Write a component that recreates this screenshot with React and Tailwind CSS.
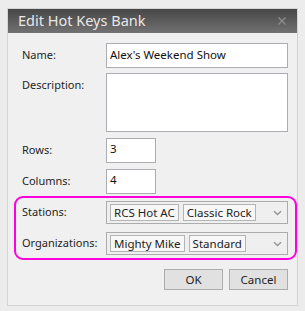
import React from "react";

const font = { fontFamily: '"Segoe UI", "Noto Sans", sans-serif' };

function Chevron() {
  return (
    <svg width="9" height="6" viewBox="0 0 9 6" className="shrink-0">
      <path d="M1 1.2 L4.5 4.5 L8 1.2" fill="none" stroke="#969696" strokeWidth="1.5" />
    </svg>
  );
}

function Tag({ children }) {
  return (
    <span className="h-[17px] px-[3px] flex items-center border border-[#b4b4b4] bg-[#f7f7f7] text-[11.5px] leading-none text-[#222]">
      {children}
    </span>
  );
}

function Field({ label, h = "h-[25px]", w = "w-[182px]", children, top }) {
  return (
    <div className="flex items-start">
      <div className="w-[84px] h-[25px] flex items-center text-[11px] text-[#1e1e1e]">{label}</div>
      <div className={`${w} ${h} border border-[#abadb3] bg-white px-[3px] ${top ? "pt-[2px]" : "pt-[3px]"} text-[11.5px] leading-[16px] text-[#111]`}>
        {children}
      </div>
    </div>
  );
}

function Combo({ label, tags }) {
  return (
    <div className="flex items-center">
      <div className="w-[84px] text-[11px] text-[#1e1e1e]">{label}</div>
      <div className="w-[182px] h-[23px] border border-[#acacac] bg-[#efefef] flex items-center pl-[3px] pr-[5px] gap-[4px]">
        {tags.map((t) => (
          <Tag key={t}>{t}</Tag>
        ))}
        <div className="flex-1" />
        <Chevron />
      </div>
    </div>
  );
}

export default function App() {
  return (
    <div style={font} className="w-[305px] h-[311px] bg-[#ececec] pl-[7px] pt-[8px] overflow-hidden">
      <div className="w-[291px] h-[298px] border border-[#d4d4d4] bg-[#f0f0f0] flex flex-col">
        <div className="h-[24px] bg-gradient-to-b from-[#474747] to-[#727272] flex items-center justify-between pl-[10px] pr-[11px]">
          <span className="text-[14.5px] leading-none text-[#e8e8e8] pb-[1px]">Edit Hot Keys Bank</span>
          <svg width="8" height="8" viewBox="0 0 8 8">
            <path d="M0.5 0.5 L7.5 7.5 M7.5 0.5 L0.5 7.5" stroke="#8c8c8c" strokeWidth="1.4" />
          </svg>
        </div>
        <div className="flex flex-col pl-[14px] pt-[10px]">
          <Field label="Name:">Alex's Weekend Show</Field>
          <div className="h-[5px]" />
          <Field label="Description:" h="h-[59px]" />
          <div className="h-[6px]" />
          <Field label="Rows:" w="w-[50px]" top>3</Field>
          <div className="h-[6px]" />
          <Field label="Columns:" w="w-[50px]" top>4</Field>
          <div className="ml-[-8px] mt-[2px] w-[283px] h-[64px] border-2 border-[#ff00dc] rounded-[9px] pl-[6px] pt-[3px] flex flex-col gap-[8px]">
            <Combo label="Stations:" tags={["RCS Hot AC", "Classic Rock"]} />
            <Combo label="Organizations:" tags={["Mighty Mike", "Standard"]} />
          </div>
          <div className="flex justify-end gap-[6px] mt-[9px] pr-[9px]">
            <button className="w-[59px] h-[21px] border border-[#adadad] bg-[#e1e1e1] text-[11.5px] text-[#1e1e1e] leading-none">OK</button>
            <button className="w-[59px] h-[21px] border border-[#adadad] bg-[#e1e1e1] text-[11.5px] text-[#1e1e1e] leading-none">Cancel</button>
          </div>
        </div>
      </div>
    </div>
  );
}
